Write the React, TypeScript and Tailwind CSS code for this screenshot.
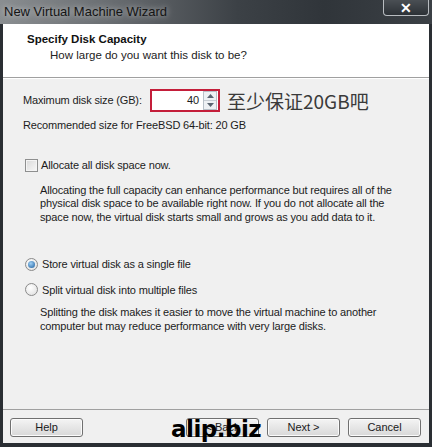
import React from "react";

const ui = { fontFamily: '"Liberation Sans", Arial, sans-serif' };

const Button = ({ label }: { label: string }) => (
  <div className="w-[73px] h-[19px] flex items-center justify-center rounded-[3px] border border-[#707070] bg-[linear-gradient(#f4f4f4,#e6e6e6_50%,#d8d8d8)] text-[11px] text-[#1a1a1a] shadow-[inset_0_0_0_1px_#fbfbfb]">
    {label}
  </div>
);

const Radio = ({ checked }: { checked?: boolean }) => (
  <div className="w-[13px] h-[13px] rounded-full border border-[#8a8a8a] bg-[radial-gradient(circle_at_40%_35%,#ffffff,#dcdcdc)] flex items-center justify-center shrink-0">
    {checked && <div className="w-[7px] h-[7px] rounded-full bg-[radial-gradient(circle_at_40%_35%,#9fd0f5,#1a5c9c)]" />}
  </div>
);

export default function App() {
  return (
    <div className="w-[432px] h-[447px] flex flex-col bg-[#2a2e33] relative overflow-hidden" style={ui}>
      {/* title bar */}
      <div className="h-[24px] flex justify-between bg-[linear-gradient(90deg,#8a8e91_0%,#6a6e72_25%,#3c4146_55%,#30353a_75%,#3b4045_100%)]">
        <span className="pl-[4px] pt-[2px] text-[13px] text-[#141414] [text-shadow:0_0_6px_rgba(255,255,255,0.7)]">
          New Virtual Machine Wizard
        </span>
        <div className="mr-[3px] w-[46px] h-[16px] rounded-b-[4px] border border-t-0 border-[#b8bcc0] bg-[linear-gradient(#4a4f54,#2c3136)] flex items-center justify-center text-white text-[14px] font-bold leading-none">
          ✕
        </div>
      </div>

      <div className="flex-1 flex flex-col mx-[3px] bg-[#f0f0f0]">
        {/* header */}
        <div className="h-[54px] bg-white border-b border-[#a0a0a0] pl-[24px] pt-[8px]">
          <div className="text-[11.5px] font-bold text-[#111] leading-[14px]">Specify Disk Capacity</div>
          <div className="text-[11.5px] text-[#222] leading-[14px] pl-[23px] mt-[2px]">How large do you want this disk to be?</div>
        </div>

        {/* body */}
        <div className="flex-1 flex flex-col pl-[20px] pr-[10px] text-[11px] tracking-[-0.15px] text-[#1c1c1c] border-t border-white">
          <div className="flex items-center mt-[10px] h-[23px]">
            <span className="w-[127px]">Maximum disk size (GB):</span>
            <div className="w-[70px] h-[23px] border-2 border-[#c41e3a] bg-white flex items-center justify-end pr-[1px]">
              <span className="mr-[4px]">40</span>
              <div className="w-[14px] h-[19px] border border-[#b8c0c8] flex flex-col bg-[#eef1f4]">
                <div className="flex-1 flex items-center justify-center border-b border-[#c8ced4]">
                  <svg width="7" height="4" viewBox="0 0 7 4"><path d="M0 4L3.5 0L7 4Z" fill="#5a6470" /></svg>
                </div>
                <div className="flex-1 flex items-center justify-center">
                  <svg width="7" height="4" viewBox="0 0 7 4"><path d="M0 0L3.5 4L7 0Z" fill="#5a6470" /></svg>
                </div>
              </div>
            </div>
            <span
              className="ml-[7px] text-[19px] text-[#3a3a3a] leading-none tracking-normal"
              style={{ fontFamily: '"Noto Sans CJK SC", sans-serif' }}
            >
              至少保证20GB吧
            </span>
          </div>

          <div className="mt-[6px] leading-[14px]">Recommended size for FreeBSD 64-bit: 20 GB</div>

          <div className="flex items-center mt-[25px] pl-[2px]">
            <div className="w-[13px] h-[13px] border border-[#8e8f8f] bg-[linear-gradient(135deg,#d8d8d8,#f8f8f8)] shadow-[inset_0_0_0_1px_#f4f4f4] shrink-0" />
            <span className="ml-[3px]">Allocate all disk space now.</span>
          </div>

          <div className="pl-[17px] mt-[10px] leading-[13.5px]">
            Allocating the full capacity can enhance performance but requires all of the
            <br />
            physical disk space to be available right now. If you do not allocate all the
            <br />
            space now, the virtual disk starts small and grows as you add data to it.
          </div>

          <div className="flex items-center mt-[32px] pl-[2px]">
            <Radio checked />
            <span className="ml-[4px]">Store virtual disk as a single file</span>
          </div>

          <div className="flex items-center mt-[9px] pl-[2px]">
            <Radio />
            <span className="ml-[4px]">Split virtual disk into multiple files</span>
          </div>

          <div className="pl-[17px] mt-[8px] leading-[13.5px]">
            Splitting the disk makes it easier to move the virtual machine to another
            <br />
            computer but may reduce performance with very large disks.
          </div>
        </div>

        {/* footer */}
        <div className="h-[34px] border-t border-[#a0a0a0] flex items-start pt-[8px] pl-[7px] pr-[8px]">
          <Button label="Help" />
          <div className="ml-auto flex gap-[8px]">
            <Button label="< Back" />
            <Button label="Next >" />
            <Button label="Cancel" />
          </div>
        </div>
      </div>
      <div className="h-[4px]" />

      {/* watermark */}
      <div
        className="absolute left-[171px] top-[418px] text-[23px] font-bold text-black tracking-[-0.5px] leading-none"
        style={{ fontFamily: '"DejaVu Sans", sans-serif' }}
      >
        alip.biz
      </div>
    </div>
  );
}
